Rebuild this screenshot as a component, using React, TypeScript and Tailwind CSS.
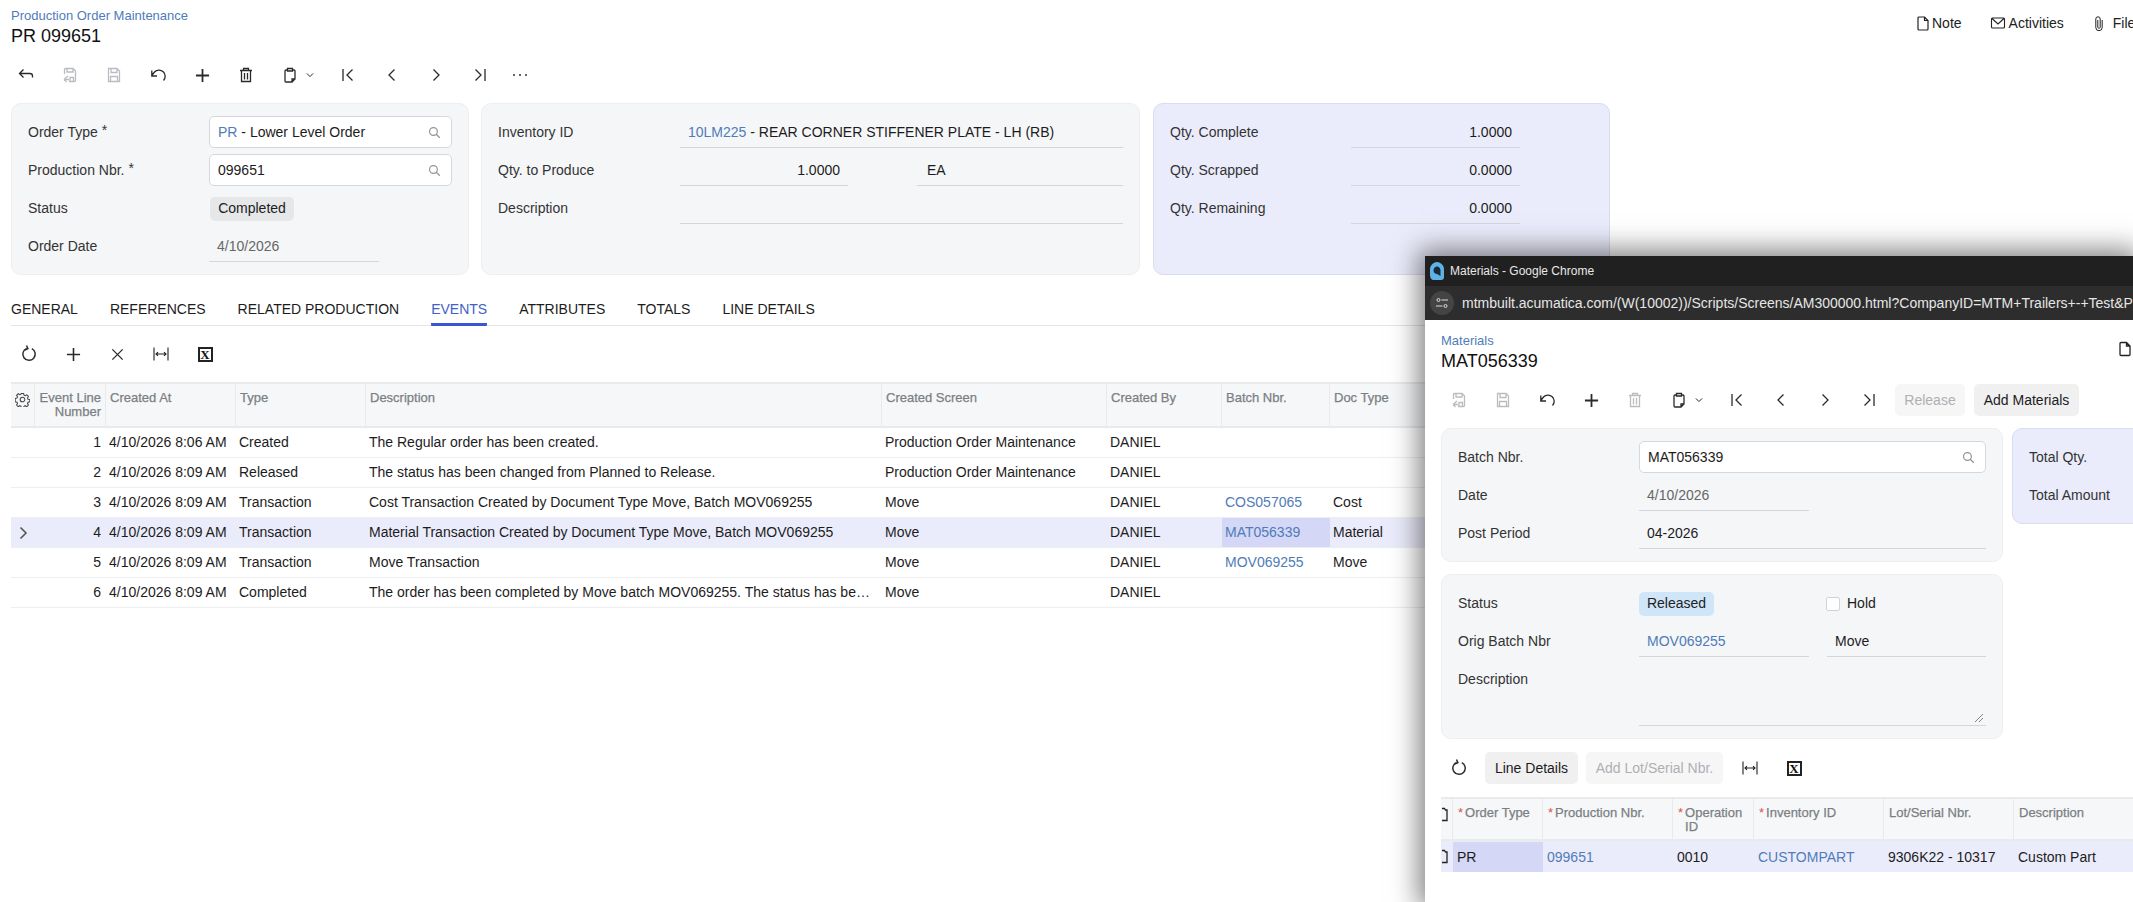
import React from "react";

type IP = { d: string; w?: number; h?: number; c?: string; s?: number; cls?: string };
const I = ({ d, w = 16, h = 16, c = "#2a2a2a", s = 1.3, cls = "" }: IP) => (
  <svg width={w} height={h} viewBox="0 0 16 16" fill="none" stroke={c} strokeWidth={s} className={"block shrink-0 " + cls}>
    <path d={d} />
  </svg>
);
const P = {
  back: "M1.500 6.500h10.500a2.500 2.500 0 0 1 2.500 2.500v1.500M5.500 2.500l-4 4 4 4",
  saveBack: "M7 14.500H12.500a1 1 0 0 0 1-1V4L11 1.500H3.500a1 1 0 0 0-1 1V7M5 1.500v3.500h6V1.500M8 14.500v-4h3.500v4M6 9 2 12.500M2 12.500h5M2 12.500 4.500 15",
  save: "M2.500 1.500H11L13.500 4v10.500H2.500zM5 1.500v4h6v-4M4.500 14.500V9.500h7v5",
  undo: "M13.500 13.500A5.700 5.700 0 0 0 4.500 5L1.800 8.500M1.800 3.500V9h5.200",
  plus: "M8 1v14M1 8h14",
  trash: "M2 3.500h12M5.500 3.500v-2h5v2M3.500 3.500v11h9v-11M6.500 6v6.500M9.500 6v6.500",
  clip: "M5.500 3H4a1 1 0 0 0-1 1v10a1 1 0 0 0 1 1h6l3-3V4a1 1 0 0 0-1-1h-1.500M5.500 1.500h5V4h-5zM10 15v-3h3",
  clipEdge: "M1 2.500h2.500l1 1.500H6v10.500H1",
  first: "M3 2v12M12.500 2.500 7 8l5.500 5.500",
  prev: "M10.500 2.500 5 8l5.500 5.500",
  next: "M5.500 2.500 11 8l-5.500 5.500",
  last: "M13 2v12M3.500 2.500 9 8l-5.500 5.500",
  down: "M3 5.500 8 10.500l5-5",
  refresh: "M6 3A5.500 5.500 0 1 0 10.500 3.200M5.800 0.500 7 3.300 4.300 4.600",
  x: "M2.500 2.500l11 11M13.500 2.500l-11 11",
  fit: "M1 1.500v13M15 1.500v13M3 8h10M5 6.200 3 8l2 1.800M11 6.200 13 8l-2 1.800",
  doc: "M4 1.500h5.500L13 5v8.500a1 1 0 0 1-1 1H4a1 1 0 0 1-1-1v-11a1 1 0 0 1 1-1zM9.500 1.500V5H13",
  mail: "M2.500 3h11a1 1 0 0 1 1 1v8a1 1 0 0 1-1 1h-11a1 1 0 0 1-1-1V4a1 1 0 0 1 1-1zM2 3.500 8 9l6-5.500",
  paper: "M6.800 4.500V12a1.300 1.300 0 0 0 2.400 0V3.500a2.200 2.200 0 0 0-4.400 0V12a3.200 3.200 0 0 0 6.400 0V4.500",
  search: "M10.500 10.500 14.500 14.500M11.500 6.700a4.800 4.800 0 1 1-9.600 0 4.800 4.800 0 0 1 9.600 0z",
  gear: "M6.800 1.500h2.400l.4 1.900 1.300.6 1.700-1 1.700 1.700-1 1.700.6 1.300 1.900.4v2.400l-1.900.4-.6 1.300 1 1.700-1.700 1.700-1.700-1-1.300.6-.4 1.900H6.800l-.4-1.900-1.300-.6-1.700 1-1.700-1.700 1-1.700-.6-1.300-1.900-.4V6.900l1.900-.4.6-1.300-1-1.700 1.700-1.700 1.700 1 1.300-.6zM10.500 8a2.500 2.500 0 1 1-5 0 2.500 2.500 0 0 1 5 0z",
};

const GRAY = "#b9bcc0";
const Excel = () => (
  <div className="w-[15px] h-[15px] border-2 border-[#222] flex items-center justify-center font-['Liberation_Serif',serif] font-bold text-[13px] leading-none text-[#111]">X</div>
);
const Slot = ({ children, w = "w-[44px]" }: { children: React.ReactNode; w?: string }) => (
  <div className={w + " h-full flex items-center justify-center shrink-0"}>{children}</div>
);
const CopyBtn = () => (
  <div className="w-[58px] h-full flex items-center pl-[14px] gap-[7px] shrink-0">
    <I d={P.clip} />
    <I d={P.down} w={10} h={10} s={1.600} />
  </div>
);
const Input = ({ children, w }: { children: React.ReactNode; w: string }) => (
  <div className={w + " h-[32px] bg-white border border-[#d5d8dc] rounded-[5px] flex items-center justify-between pl-[8px] pr-[10px]"}>
    <span>{children}</span>
    <I d={P.search} w={13} h={13} c="#909499" s={1.500} />
  </div>
);
const Under = ({ children, w, cls = "" }: { children?: React.ReactNode; w: string; cls?: string }) => (
  <div className={w + " h-[31px] border-b border-[#d4d6db] flex items-center px-[8px] pt-[2px] shrink-0 " + cls}>{children}</div>
);
const Row = ({ label, labelW, children }: { label: React.ReactNode; labelW: string; children?: React.ReactNode }) => (
  <div className="h-[38px] flex items-center">
    <div className={labelW + " shrink-0 text-[#333]"}>{label}</div>
    {children}
  </div>
);
const Req = ({ t }: { t: string }) => (
  <span>{t} <span className="relative top-[-2px]">*</span></span>
);
const Link = ({ children }: { children: React.ReactNode }) => <span className="text-[#4f7cb8]">{children}</span>;

const headText = "text-[13px] font-normal leading-[14px] text-[#7b7f84] [-webkit-text-stroke:0.25px_#7b7f84]";

const cols = [24, 71, 130, 130, 516, 225, 115, 108, 130];
const heads = ["", "Event Line Number", "Created At", "Type", "Description", "Created Screen", "Created By", "Batch Nbr.", "Doc Type"];
const rows = [
  ["1", "4/10/2026 8:06 AM", "Created", "The Regular order has been created.", "Production Order Maintenance", "DANIEL", "", ""],
  ["2", "4/10/2026 8:09 AM", "Released", "The status has been changed from Planned to Release.", "Production Order Maintenance", "DANIEL", "", ""],
  ["3", "4/10/2026 8:09 AM", "Transaction", "Cost Transaction Created by Document Type Move, Batch MOV069255", "Move", "DANIEL", "COS057065", "Cost"],
  ["4", "4/10/2026 8:09 AM", "Transaction", "Material Transaction Created by Document Type Move, Batch MOV069255", "Move", "DANIEL", "MAT056339", "Material"],
  ["5", "4/10/2026 8:09 AM", "Transaction", "Move Transaction", "Move", "DANIEL", "MOV069255", "Move"],
  ["6", "4/10/2026 8:09 AM", "Completed", "The order has been completed by Move batch MOV069255. The status has been changed to Completed.", "Move", "DANIEL", "", ""],
];
const tabs = ["GENERAL", "REFERENCES", "RELATED PRODUCTION", "EVENTS", "ATTRIBUTES", "TOTALS", "LINE DETAILS"];

const Grid = () => (
  <div className="mt-[13px] w-[2122px]">
    <div className="flex h-[46px] bg-[#f6f7f8] border-t-2 border-b-2 border-[#e8eaec] box-border">
      {heads.map((h, i) => (
        <div
          key={i}
          style={{ width: cols[i] }}
          className={"shrink-0 border-r border-[#e8eaec] pt-[7px] px-[4px] " + headText + (i === 1 ? " text-right" : "")}
        >
          {i === 0 ? <I d={P.gear} w={15} h={15} c="#444" s={1.100} cls="mt-[1px]" /> : h}
        </div>
      ))}
    </div>
    {rows.map((r) => {
      const sel = r[0] === "4";
      return (
        <div key={r[0]} className={"flex h-[30px] items-center border-b border-[#eceef0] " + (sel ? "bg-[#ebecfb]" : "")}>
          <div style={{ width: cols[0] }} className="shrink-0 flex justify-center">
            {sel && <I d={P.next} w={16} h={16} c="#555" s={1.600} />}
          </div>
          <div style={{ width: cols[1] }} className="shrink-0 text-right pr-[5px]">{r[0]}</div>
          <div style={{ width: cols[2] }} className="shrink-0 pl-[3px] whitespace-nowrap">{r[1]}</div>
          <div style={{ width: cols[3] }} className="shrink-0 pl-[3px]">{r[2]}</div>
          <div style={{ width: cols[4] }} className="shrink-0 pl-[3px] pr-[11px] truncate">{r[3]}</div>
          <div style={{ width: cols[5] }} className="shrink-0 pl-[3px]">{r[4]}</div>
          <div style={{ width: cols[6] }} className="shrink-0 pl-[3px]">{r[5]}</div>
          <div style={{ width: cols[7] }} className={"shrink-0 pl-[3px] h-[29px] flex items-center " + (sel ? "bg-[#d4d7f5]" : "")}>
            <Link>{r[6]}</Link>
          </div>
          <div style={{ width: cols[8] }} className="shrink-0 pl-[3px]">{r[7]}</div>
        </div>
      );
    })}
  </div>
);

const wCols = [12, 90, 130, 81, 130, 130, 130];
const wHeads: [string, boolean][] = [
  ["", false],
  ["Order Type", true],
  ["Production Nbr.", true],
  ["Operation ID", true],
  ["Inventory ID", true],
  ["Lot/Serial Nbr.", false],
  ["Description", false],
];

const ChromeWindow = () => (
  <div className="absolute left-[1425px] top-[256px] w-[708px] h-[646px] bg-white overflow-hidden shadow-[0_0_26px_6px_rgba(0,0,0,0.5)]">
    <div className="h-[30px] bg-[#202020] flex items-center pl-[4px] gap-[5px] text-[12px] text-[#e8e8e8]">
      <svg width="16" height="20" viewBox="0 0 16 20">
        <path d="M8 1C11 1 15 4 15 8V16C15 18 14 19 12 19H5C2.500 19 1 17 1 14V8C1 4 5 1 8 1Z" fill="#5fb2e6" />
        <path d="M8 5.500C10 5.500 11.500 7.500 11.500 9.500V15L8 13C6 13 4.500 11.500 4.500 9.500C4.500 7.500 6 5.500 8 5.500Z" fill="#1b2a3a" />
      </svg>
      <span>Materials - Google Chrome</span>
    </div>
    <div className="h-[34px] bg-[#2d2d2d] flex items-center pl-[5px] gap-[8px] whitespace-nowrap text-[14px] text-[#e6e6e6]">
      <div className="w-[24px] h-[24px] rounded-full bg-[#444] flex items-center justify-center shrink-0">
        <svg width="14" height="14" viewBox="0 0 14 14" fill="none" stroke="#ddd" strokeWidth="1">
          <circle cx="3.500" cy="4" r="1.500" />
          <path d="M6.500 4H13M1 10h6.500" />
          <circle cx="10.500" cy="10" r="1.500" />
        </svg>
      </div>
      <span>mtmbuilt.acumatica.com/(W(10002))/Scripts/Screens/AM300000.html?CompanyID=MTM+Trailers+-+Test&amp;PopupPanel=On</span>
    </div>
    <div className="pl-[16px] w-[900px]">
      <div className="pt-[13px] text-[13px] leading-[15px] text-[#4f7cb8]">Materials</div>
      <div className="flex justify-between w-[692px]">
        <div className="mt-[2px] text-[18px] leading-[22px] text-[#111]">MAT056339</div>
        <I d={P.doc} w={16} h={18} cls="mt-[-8px]" c="#222" />
      </div>
      <div className="mt-[12px] h-[32px] flex items-center ml-[-4px]">
        <Slot><I d={P.saveBack} c={GRAY} /></Slot>
        <Slot><I d={P.save} c={GRAY} /></Slot>
        <Slot><I d={P.undo} /></Slot>
        <Slot><I d={P.plus} w={15} h={15} s={1.900} /></Slot>
        <Slot><I d={P.trash} c={GRAY} /></Slot>
        <CopyBtn />
        <Slot><I d={P.first} /></Slot>
        <Slot><I d={P.prev} /></Slot>
        <Slot><I d={P.next} /></Slot>
        <Slot><I d={P.last} /></Slot>
        <div className="ml-[4px] w-[70px] h-[32px] rounded-[5px] bg-[#f6f6f7] text-[#aeb0b3] flex items-center justify-center">Release</div>
        <div className="ml-[9px] w-[105px] h-[32px] rounded-[5px] bg-[#f0f0f1] flex items-center justify-center">Add Materials</div>
      </div>
      <div className="mt-[12px] flex gap-[9px] items-start">
        <div className="w-[562px] h-[134px] bg-[#f5f6f8] border border-[#eceef1] rounded-[10px] pt-[9px] pl-[16px]">
          <Row label="Batch Nbr." labelW="w-[181px]"><Input w="w-[347px]">MAT056339</Input></Row>
          <Row label="Date" labelW="w-[181px]"><Under w="w-[170px]" cls="text-[#666]">4/10/2026</Under></Row>
          <Row label="Post Period" labelW="w-[181px]"><Under w="w-[347px]">04-2026</Under></Row>
        </div>
        <div className="w-[300px] h-[96px] bg-[#ebecfb] border border-[#d9dbf0] rounded-[10px] pt-[9px] pl-[16px]">
          <Row label="Total Qty." labelW="w-[181px]" />
          <Row label="Total Amount" labelW="w-[181px]" />
        </div>
      </div>
      <div className="mt-[12px] w-[562px] h-[165px] bg-[#f5f6f8] border border-[#eceef1] rounded-[10px] pt-[9px] pl-[16px]">
        <Row label="Status" labelW="w-[181px]">
          <div className="w-[75px] h-[24px] rounded-[5px] bg-[#cfe6f9] flex items-center justify-center text-[#222] mt-[1px]">Released</div>
          <div className="ml-[112px] w-[14px] h-[14px] border border-[#d0d3d7] rounded-[2px] bg-white mt-[1px]" />
          <span className="ml-[7px] mt-[1px]">Hold</span>
        </Row>
        <Row label="Orig Batch Nbr" labelW="w-[181px]">
          <Under w="w-[170px]"><Link>MOV069255</Link></Under>
          <Under w="w-[159px]" cls="ml-[18px]">Move</Under>
        </Row>
        <div className="flex">
          <div className="w-[181px] shrink-0 h-[38px] flex items-center text-[#333]">Description</div>
          <div className="w-[347px] h-[66px] border-b border-[#d4d6db] relative">
            <svg width="10" height="10" viewBox="0 0 10 10" stroke="#666" strokeWidth="0.800" className="absolute right-[2px] bottom-[2px]">
              <path d="M1 9 9 1M5 9 9 5" />
            </svg>
          </div>
        </div>
      </div>
      <div className="mt-[13px] h-[32px] flex items-center ml-[-4px]">
        <Slot><I d={P.refresh} w={18} h={18} /></Slot>
        <div className="ml-[4px] w-[93px] h-[32px] rounded-[5px] bg-[#f0f0f1] flex items-center justify-center">Line Details</div>
        <div className="ml-[8px] w-[137px] h-[32px] rounded-[5px] bg-[#f6f6f7] text-[#aeb0b3] flex items-center justify-center">Add Lot/Serial Nbr.</div>
        <div className="ml-[5px] flex h-full">
          <Slot><I d={P.fit} c="#222" s={1.100} /></Slot>
          <Slot><Excel /></Slot>
        </div>
      </div>
      <div className="mt-[13px]">
        <div className="flex h-[44px] bg-[#f6f7f8] border-t-2 border-b-2 border-[#e8eaec]">
          {wHeads.map(([h, req], i) => (
            <div key={i} style={{ width: wCols[i] }} className={"shrink-0 border-r border-[#e8eaec] overflow-hidden pt-[7px] pl-[5px] pr-[4px] relative flex " + headText}>
              {i === 0 ? (
                <I d={P.clipEdge} w={16} h={16} cls="absolute left-[0px] top-[7px]" c="#222" s={1.300} />
              ) : (
                <>
                  {req && <span className="text-[#d9534f] [-webkit-text-stroke:0px] mr-[2px]">*</span>}
                  <span>{h}</span>
                </>
              )}
            </div>
          ))}
        </div>
        <div className="flex h-[31px] items-center bg-[#ebecfb] pt-[1px]">
          <div style={{ width: wCols[0] }} className="shrink-0 relative h-full overflow-hidden">
            <I d={P.clipEdge} w={16} h={16} cls="absolute left-[0px] top-[6px]" c="#222" s={1.300} />
          </div>
          <div style={{ width: wCols[1] }} className="shrink-0 h-full pl-[4px] bg-[#d4d7f5] flex items-center">PR</div>
          <div style={{ width: wCols[2] }} className="shrink-0 pl-[4px]"><Link>099651</Link></div>
          <div style={{ width: wCols[3] }} className="shrink-0 pl-[4px]">0010</div>
          <div style={{ width: wCols[4] }} className="shrink-0 pl-[4px]"><Link>CUSTOMPART</Link></div>
          <div style={{ width: wCols[5] }} className="shrink-0 pl-[4px]">9306K22 - 10317</div>
          <div style={{ width: wCols[6] }} className="shrink-0 pl-[4px]">Custom Part</div>
        </div>
      </div>
    </div>
  </div>
);

export default function App() {
  return (
    <div className="relative w-[2133px] h-[902px] overflow-hidden bg-white font-['Liberation_Sans',Arial,sans-serif] text-[14px] text-[#1c1c1c]">
      <div className="px-[11px]">
        <div className="flex pt-[8px] whitespace-nowrap">
          <div className="w-[1904px] shrink-0">
            <div className="text-[13px] leading-[15px] text-[#4f7cb8]">Production Order Maintenance</div>
            <div className="mt-[2px] text-[18px] leading-[22px] text-[#111]">PR 099651</div>
          </div>
          <div className="flex items-center h-[15px] pt-[15px] text-[#222]">
            <I d={P.doc} w={16} h={17} c="#222" s={1.200} />
            <span className="ml-[1px]">Note</span>
            <I d={P.mail} w={16} h={16} c="#222" s={1.100} cls="ml-[28px]" />
            <span className="ml-[3px]">Activities</span>
            <I d={P.paper} w={16} h={17} c="#222" s={1.000} cls="ml-[27px]" />
            <span className="ml-[6px]">Files</span>
          </div>
        </div>
        <div className="mt-[13px] h-[30px] flex items-center ml-[-7px]">
          <Slot><I d={P.back} /></Slot>
          <Slot><I d={P.saveBack} c={GRAY} /></Slot>
          <Slot><I d={P.save} c={GRAY} /></Slot>
          <Slot><I d={P.undo} /></Slot>
          <Slot><I d={P.plus} w={15} h={15} s={1.900} /></Slot>
          <Slot><I d={P.trash} /></Slot>
          <CopyBtn />
          <Slot><I d={P.first} /></Slot>
          <Slot><I d={P.prev} /></Slot>
          <Slot><I d={P.next} /></Slot>
          <Slot><I d={P.last} /></Slot>
          <Slot w="w-[36px]">
            <svg width="16" height="4" viewBox="0 0 16 4" fill="#333"><circle cx="2" cy="2" r="1" /><circle cx="8" cy="2" r="1" /><circle cx="14" cy="2" r="1" /></svg>
          </Slot>
        </div>
        <div className="mt-[13px] flex">
          <div className="w-[458px] h-[172px] bg-[#f5f6f8] border border-[#eceef1] rounded-[10px] pt-[9px] pl-[16px]">
            <Row label={<Req t="Order Type" />} labelW="w-[181px]">
              <Input w="w-[243px]"><Link>PR</Link> - Lower Level Order</Input>
            </Row>
            <Row label={<Req t="Production Nbr." />} labelW="w-[181px]"><Input w="w-[243px]">099651</Input></Row>
            <Row label="Status" labelW="w-[181px]">
              <div className="w-[84px] h-[24px] ml-[1px] mt-[1px] rounded-[5px] bg-[#e6e7e9] flex items-center justify-center">Completed</div>
            </Row>
            <Row label="Order Date" labelW="w-[181px]"><Under w="w-[170px]" cls="text-[#666]">4/10/2026</Under></Row>
          </div>
          <div className="ml-[12px] w-[659px] h-[172px] bg-[#f5f6f8] border border-[#eceef1] rounded-[10px] pt-[9px] pl-[16px]">
            <Row label="Inventory ID" labelW="w-[182px]">
              <Under w="w-[443px]"><Link>10LM225</Link>&nbsp;- REAR CORNER STIFFENER PLATE - LH (RB)</Under>
            </Row>
            <Row label="Qty. to Produce" labelW="w-[182px]">
              <Under w="w-[168px]" cls="justify-end">1.0000</Under>
              <Under w="w-[206px]" cls="ml-[69px] pl-[10px]">EA</Under>
            </Row>
            <Row label="Description" labelW="w-[182px]"><Under w="w-[443px]" /></Row>
          </div>
          <div className="ml-[13px] w-[457px] h-[172px] bg-[#ebecfb] border border-[#d9dbf0] rounded-[10px] pt-[9px] pl-[16px]">
            {[["Qty. Complete", "1.0000"], ["Qty. Scrapped", "0.0000"], ["Qty. Remaining", "0.0000"]].map(([l, v]) => (
              <Row key={l} label={l} labelW="w-[181px]"><Under w="w-[169px]" cls="justify-end">{v}</Under></Row>
            ))}
          </div>
        </div>
        <div className="mt-[18px] flex gap-[32px] h-[33px] border-b border-[#e2e4e7] w-[2122px]">
          {tabs.map((t) =>
            t === "EVENTS" ? (
              <div key={t} className="h-[33px] flex items-center text-[#3f62c9] border-b-[3px] border-[#3b55d4] rounded-b-[1px] pt-[3px]">{t}</div>
            ) : (
              <div key={t} className="h-[33px] flex items-center">{t}</div>
            )
          )}
        </div>
        <div className="mt-[13px] h-[30px] flex items-center ml-[-4px]">
          <Slot><I d={P.refresh} w={18} h={18} /></Slot>
          <Slot><I d={P.plus} w={15} h={15} s={1.700} /></Slot>
          <Slot><I d={P.x} w={15} h={15} s={1.400} /></Slot>
          <Slot><I d={P.fit} c="#222" s={1.100} /></Slot>
          <Slot><Excel /></Slot>
        </div>
        <Grid />
      </div>
      <ChromeWindow />
    </div>
  );
}
